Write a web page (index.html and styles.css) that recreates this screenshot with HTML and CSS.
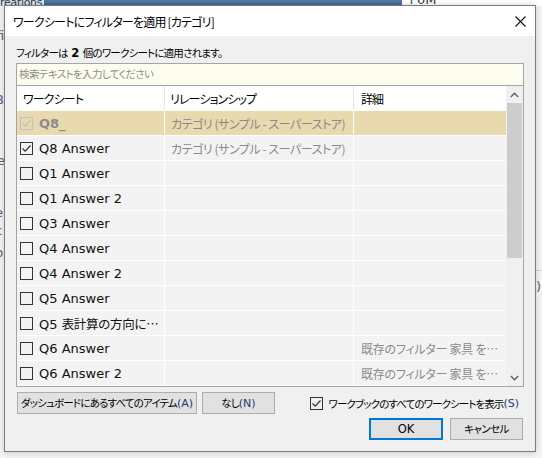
FILE: index.html
```html
<!DOCTYPE html>
<html lang="ja">
<head>
<meta charset="utf-8">
<title>ワークシートにフィルターを適用</title>
<link rel="stylesheet" href="styles.css">
</head>
<body>
<div class="desktop">
  <div class="bg-top">
    <span class="bg-tab">reations</span>
    <span class="bg-bar"></span>
    <span class="bg-val">+0M</span>
  </div>
  <div class="bg-left">
    <span class="frag f1">fi</span>
    <span class="frag f2">B</span>
    <span class="frag f3">re</span>
    <span class="frag f4">e</span>
    <span class="frag f5">c</span>
    <span class="frag f6">b</span>
  </div>
  <div class="bg-right">
    <span class="rline"></span>
    <span class="frag r1">),</span>
  </div>

  <div class="dialog">
    <div class="titlebar">
      <span class="title">ワークシートにフィルターを適用 [カテゴリ]</span>
      <svg class="close" width="11" height="11" viewBox="0 0 11 11"><path d="M0.5 0.5 L10.5 10.5 M10.5 0.5 L0.5 10.5" stroke="#111" stroke-width="1.1" fill="none"/></svg>
    </div>
    <div class="content">
      <p class="info">フィルターは <b>2</b> 個のワークシートに適用されます。</p>
      <div class="search">検索テキストを入力してください</div>
      <div class="table">
        <div class="grid">
          <div class="row head">
            <div class="cell c1">ワークシート</div>
            <div class="cell c2">リレーションシップ</div>
            <div class="cell c3">詳細</div>
          </div>
          <div class="row sel">
            <div class="cell c1"><span class="cb checked disabled"><svg viewBox="0 0 13 13"><path d="M2.5 6.5 L5.2 9.2 L10.5 3.5" fill="none" stroke-width="1.2"/></svg></span><span class="name bold">Q8_</span></div>
            <div class="cell c2 muted">カテゴリ (サンプル - スーパーストア)</div>
            <div class="cell c3"></div>
          </div>
          <div class="row">
            <div class="cell c1"><span class="cb checked"><svg viewBox="0 0 13 13"><path d="M2.5 6.5 L5.2 9.2 L10.5 3.5" fill="none" stroke-width="1.2"/></svg></span><span class="name">Q8 Answer</span></div>
            <div class="cell c2 muted">カテゴリ (サンプル - スーパーストア)</div>
            <div class="cell c3"></div>
          </div>
          <div class="row">
            <div class="cell c1"><span class="cb"></span><span class="name">Q1 Answer</span></div>
            <div class="cell c2"></div>
            <div class="cell c3"></div>
          </div>
          <div class="row">
            <div class="cell c1"><span class="cb"></span><span class="name">Q1 Answer 2</span></div>
            <div class="cell c2"></div>
            <div class="cell c3"></div>
          </div>
          <div class="row">
            <div class="cell c1"><span class="cb"></span><span class="name">Q3 Answer</span></div>
            <div class="cell c2"></div>
            <div class="cell c3"></div>
          </div>
          <div class="row">
            <div class="cell c1"><span class="cb"></span><span class="name">Q4 Answer</span></div>
            <div class="cell c2"></div>
            <div class="cell c3"></div>
          </div>
          <div class="row">
            <div class="cell c1"><span class="cb"></span><span class="name">Q4 Answer 2</span></div>
            <div class="cell c2"></div>
            <div class="cell c3"></div>
          </div>
          <div class="row">
            <div class="cell c1"><span class="cb"></span><span class="name">Q5 Answer</span></div>
            <div class="cell c2"></div>
            <div class="cell c3"></div>
          </div>
          <div class="row">
            <div class="cell c1"><span class="cb"></span><span class="name">Q5 <span class="jp">表計算の方向に…</span></span></div>
            <div class="cell c2"></div>
            <div class="cell c3"></div>
          </div>
          <div class="row">
            <div class="cell c1"><span class="cb"></span><span class="name">Q6 Answer</span></div>
            <div class="cell c2"></div>
            <div class="cell c3 muted">既存のフィルター 家具 を…</div>
          </div>
          <div class="row">
            <div class="cell c1"><span class="cb"></span><span class="name">Q6 Answer 2</span></div>
            <div class="cell c2"></div>
            <div class="cell c3 muted">既存のフィルター 家具 を…</div>
          </div>
        </div>
        <div class="scrollbar">
          <div class="arrow"><svg width="9" height="6" viewBox="0 0 9 6"><path d="M0.8 5 L4.5 1.3 L8.2 5" fill="none" stroke="#606060" stroke-width="1.4"/></svg></div>
          <div class="track"><div class="thumb"></div></div>
          <div class="arrow"><svg width="9" height="6" viewBox="0 0 9 6"><path d="M0.8 1 L4.5 4.7 L8.2 1" fill="none" stroke="#606060" stroke-width="1.4"/></svg></div>
        </div>
      </div>
      <div class="actions">
        <button class="btn wide">ダッシュボードにあるすべてのアイテム<span class="mn">(A)</span></button>
        <button class="btn none">なし<span class="mn">(N)</span></button>
        <label class="showall"><span class="cb checked"><svg viewBox="0 0 13 13"><path d="M2.5 6.5 L5.2 9.2 L10.5 3.5" fill="none" stroke-width="1.2"/></svg></span>ワークブックのすべてのワークシートを表示<span class="mn">(S)</span></label>
      </div>
      <div class="footer">
        <button class="btn ok">OK</button>
        <button class="btn cancel">キャンセル</button>
      </div>
    </div>
  </div>
</div>
</body>
</html>
```

FILE: styles.css
```css
html, body {
  margin: 0;
  padding: 0;
}
body {
  font-family: "DejaVu Sans", "Noto Sans CJK JP", sans-serif;
  font-feature-settings: "palt";
  background: #eef0f2;
  overflow: hidden;
}
.desktop {
  position: relative;
  width: 542px;
  height: 458px;
  overflow: hidden;
  background: #f0f0f0;
}

/* ---------- backdrop app pieces ---------- */
.bg-top {
  position: absolute;
  left: 0;
  top: 0;
  width: 542px;
  height: 6px;
  display: flex;
  background: #ffffff;
  overflow: hidden;
}
.bg-tab {
  width: 44px;
  background: #dfe5ec;
  color: #2d3b4e;
  font-family: "DejaVu Sans", sans-serif;
  font-size: 11px;
  letter-spacing: -0.3px;
  line-height: 6px;
  margin-top: -3px;
  padding-top: 3px;
  overflow: hidden;
  white-space: nowrap;
}
.bg-bar {
  width: 358px;
  background: linear-gradient(#5a7ea8, #3f6590);
  border-bottom: 1px solid #2b4460;
}
.bg-val {
  color: #2d3b4e;
  font-size: 13px;
  line-height: 6px;
  margin-top: -3px;
  padding-left: 4px;
}
.bg-left {
  position: absolute;
  left: 0;
  top: 6px;
  width: 5px;
  height: 452px;
  background: #f4f4f4;
  overflow: hidden;
}
.bg-right {
  position: absolute;
  right: 0;
  top: 6px;
  width: 6px;
  height: 452px;
  background: #f4f4f4;
  overflow: hidden;
}
.rline {
  position: absolute;
  left: 0;
  top: 264px;
  width: 6px;
  height: 1px;
  background: #d8d8d8;
}
.frag {
  position: absolute;
  color: #4e6586;
  font-size: 13px;
  font-family: "DejaVu Sans", sans-serif;
  line-height: 14px;
}
.f1 { left: -4px; top: 23px; }
.f2 { left: -5px; top: 87px; }
.f3 { left: -8px; top: 148px; }
.f4 { left: -5px; top: 200px; }
.f5 { left: -5px; top: 218px; }
.f6 { left: -5px; top: 240px; }
.r1 { left: 0; top: 274px; }

/* ---------- dialog ---------- */
.dialog {
  position: absolute;
  left: 4px;
  top: 5px;
  width: 532px;
  height: 447px;
  box-sizing: border-box;
  border: 1px solid #7c7c7c;
  background: #f0f0f0;
  display: flex;
  flex-direction: column;
  box-shadow: 0 0 6px rgba(0,0,0,0.18);
}
.titlebar {
  height: 30px;
  flex: none;
  background: #ffffff;
  display: flex;
  align-items: center;
  padding-left: 8px;
  padding-right: 9px;
}
.title {
  flex: 1;
  font-family: "Noto Sans CJK JP", sans-serif;
  font-size: 12px;
  letter-spacing: -0.8px;
  color: #000;
  line-height: 16px;
  padding-top: 1px;
}
.close {
  display: block;
}
.content {
  flex: 1;
  padding: 10px 11px 11px 11px;
  display: flex;
  flex-direction: column;
}
.info {
  margin: 0;
  font-size: 10.5px;
  letter-spacing: -0.8px;
  line-height: 14px;
  color: #000;
  font-family: "Noto Sans CJK JP", sans-serif;
}
.info b {
  font-family: "DejaVu Sans", sans-serif;
  font-weight: bold;
  font-size: 11.5px;
  letter-spacing: 0;
  padding: 0 2px;
}
.search {
  margin-top: 3px;
  height: 23px;
  box-sizing: border-box;
  border: 1px solid #a5a5a5;
  background: #fdfdef;
  color: #8c8c8c;
  font-family: "Noto Sans CJK JP", sans-serif;
  font-size: 10.5px;
  letter-spacing: -0.6px;
  line-height: 20px;
  padding-left: 2px;
}

/* ---------- table ---------- */
.table {
  height: 301px;
  box-sizing: border-box;
  border: 1px solid #a5a5a5;
  border-top: none;
  display: flex;
  background: #f3f3f3;
}
.grid {
  width: 489px;
  display: flex;
  flex-direction: column;
}
.row {
  height: 25px;
  box-sizing: border-box;
  border-bottom: 1px solid #ffffff;
  display: flex;
  background: #f3f3f3;
}
.row.head {
  background: #ffffff;
}
.row.sel {
  background: #e9d9ae;
}
.cell {
  box-sizing: border-box;
  display: flex;
  align-items: center;
  white-space: pre;
  overflow: hidden;
  font-size: 12px;
}
.c1 { width: 148px; border-right: 1px solid #ffffff; padding-left: 3px; }
.c2 { width: 189px; border-right: 1px solid #ffffff; padding-left: 6px; }
.c3 { width: 152px; padding-left: 7px; }
.head .cell {
  font-family: "Noto Sans CJK JP", sans-serif;
  font-size: 12px;
  letter-spacing: -0.9px;
  color: #000;
  border-right-color: #e6e6e6;
}
.head .c1 { padding-left: 6px; }
.head .c2 { padding-left: 5px; }
.head .c3 { border-right: none; }
.muted {
  color: #8a8a8a;
  font-family: "Noto Sans CJK JP", sans-serif;
  font-size: 12px;
  letter-spacing: -0.45px;
}
.c3.muted { letter-spacing: -0.25px; }
.c2.muted { padding-left: 6px; }
.name {
  font-size: 13px;
  color: #111;
  margin-left: 6px;
  padding-top: 1px;
}
.name .jp {
  font-family: "Noto Sans CJK JP", sans-serif;
  font-size: 12.5px;
  letter-spacing: -0.3px;
}
.name.bold {
  font-weight: bold;
  color: #8c8c8c;
}
.cb {
  width: 13px;
  height: 13px;
  box-sizing: border-box;
  border: 1px solid #333333;
  flex: none;
  display: inline-flex;
  align-items: center;
  justify-content: center;
  background: transparent;
}
.cb svg {
  width: 13px;
  height: 13px;
  display: none;
  margin: -1px;
}
.cb.checked svg {
  display: block;
  stroke: #333;
}
.cb.disabled {
  border-color: #c2c2c2;
}
.cb.disabled svg {
  stroke: #bdbdbd;
}

/* ---------- scrollbar ---------- */
.scrollbar {
  width: 17px;
  display: flex;
  flex-direction: column;
  background: #f0f0f0;
}
.arrow {
  height: 17px;
  flex: none;
  display: flex;
  align-items: center;
  justify-content: center;
}
.track {
  flex: 1;
  padding: 0 1px;
}
.thumb {
  height: 155px;
  background: #cdcdcd;
}

/* ---------- buttons ---------- */
.actions {
  margin-top: 5px;
  display: flex;
  align-items: center;
  height: 22px;
}
.btn {
  height: 22px;
  box-sizing: border-box;
  border: 1px solid #adadad;
  background: #e1e1e1;
  font-family: "Noto Sans CJK JP", sans-serif;
  font-feature-settings: "palt";
  font-size: 10.5px;
  letter-spacing: -0.85px;
  color: #000;
  padding: 0;
  line-height: 18px;
  text-align: center;
  white-space: nowrap;
}
.mn {
  font-family: "DejaVu Sans", sans-serif;
  color: #1d3a70;
  font-size: 11px;
  letter-spacing: 0;
}
.btn.wide { width: 180px; margin-left: 1px; }
.btn.none { width: 73px; margin-left: 5px; }
.showall {
  margin-left: auto;
  margin-right: 5px;
  display: flex;
  align-items: center;
  font-family: "Noto Sans CJK JP", sans-serif;
  font-size: 10.5px;
  letter-spacing: -0.9px;
  color: #000;
  white-space: nowrap;
}
.showall .cb {
  margin-right: 6px;
}
.footer {
  margin-top: 4px;
  display: flex;
  justify-content: flex-end;
  padding-right: 1px;
}
.btn.ok {
  width: 74px;
  border: 2px solid #0078d7;
  font-family: "DejaVu Sans", sans-serif;
  font-size: 11.5px;
  letter-spacing: 0;
}
.btn.cancel {
  width: 73px;
  margin-left: 7px;
  letter-spacing: -0.6px;
}
```
